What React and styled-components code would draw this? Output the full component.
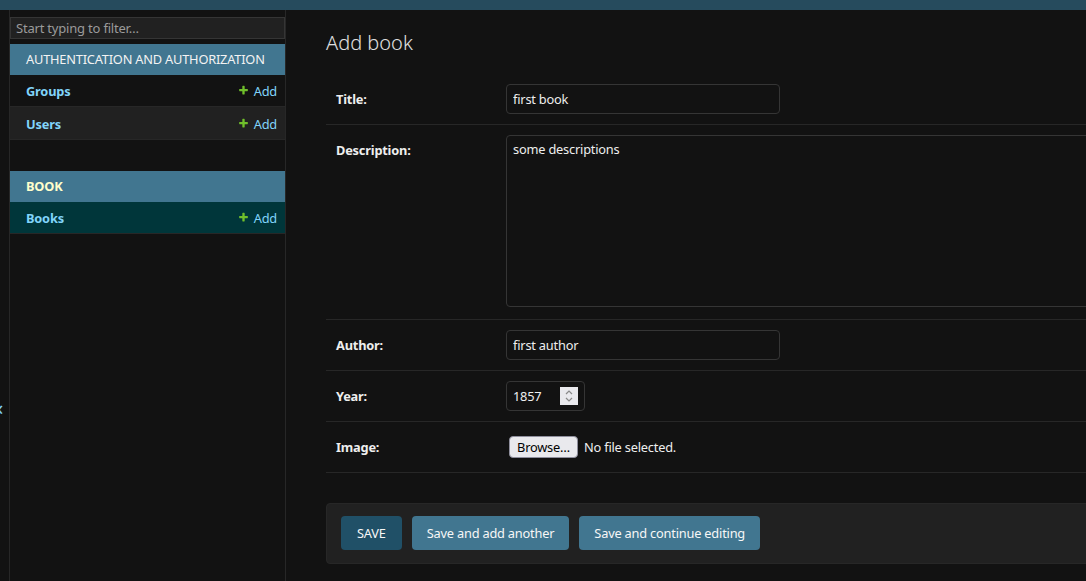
import React from "react";
import styled, { createGlobalStyle } from "styled-components";

const GlobalStyle = createGlobalStyle`
  html, body {
    margin: 0;
    padding: 0;
    background: #121212;
    overflow: hidden;
  }
  body {
    font-family: "Noto Sans", "Open Sans", sans-serif;
    font-size: 12.8px;
    letter-spacing: -0.2px;
    color: #eeeeee;
  }
  * { box-sizing: border-box; }
  input, textarea, button { letter-spacing: -0.2px; }
`;

const Page = styled.div`
  width: 1320px;
  min-height: 581px;
  display: flex;
  flex-direction: column;
  background: #121212;
`;

const Header = styled.div`
  height: 10px;
  background: #264b5d;
`;

const Body = styled.div`
  display: flex;
  flex: 1;
  min-height: 571px;
`;

const Toggle = styled.div`
  flex: 0 0 10px;
  width: 10px;
  overflow: hidden;
  border-right: 1px solid #272727;
  padding-top: 388px;
  color: #81d4fa;
  font-size: 20px;
  line-height: 20px;
`;

const ToggleGlyph = styled.span`
  display: block;
  margin-left: -7px;
`;

const Sidebar = styled.nav`
  flex: 0 0 276px;
  width: 276px;
  border-right: 1px solid #272727;
  padding-top: 7px;
`;

const Filter = styled.input`
  display: block;
  width: 100%;
  height: 22px;
  margin: 0 0 5px;
  padding: 2px 5px;
  border: 1px solid #353535;
  background: #212121;
  color: #eeeeee;
  font-family: inherit;
  font-size: 13px;
  outline: none;
  &::placeholder { color: #9b9b9b; }
`;

const Module = styled.div`
  margin-bottom: 31px;
`;

const Caption = styled.div`
  height: 31px;
  display: flex;
  align-items: center;
  padding: 0 0 1px 16px;
  background: #417690;
  color: ${(p) => (p.$current ? "#ffffcc" : "#f3f3f3")};
  font-weight: ${(p) => (p.$current ? 700 : 400)};
`;

const NavRow = styled.div`
  height: ${(p) => (p.$tall ? 33 : 32)}px;
  display: flex;
  align-items: center;
  justify-content: space-between;
  padding: ${(p) => (p.$tall ? "1px" : "0")} 8px 0 16px;
  border-bottom: 1px solid #272727;
  background: ${(p) =>
    p.$selected ? "#00363a" : p.$alt ? "#212121" : "#121212"};
`;

const ModelLink = styled.a`
  color: #81d4fa;
  font-weight: 700;
  text-decoration: none;
`;

const AddLink = styled.a`
  display: flex;
  align-items: center;
  gap: 5px;
  color: #81d4fa;
  text-decoration: none;
`;

const PlusIcon = () => (
  <svg width="11" height="11" viewBox="0 0 1792 1792" aria-hidden="true">
    <path
      fill="#70bf2b"
      d="M1600 736v192q0 40-28 68t-68 28h-416v416q0 40-28 68t-68 28h-192q-40 0-68-28t-28-68v-416h-416q-40 0-68-28t-28-68v-192q0-40 28-68t68-28h416v-416q0-40 28-68t68-28h192q40 0 68 28t28 68v416h416q40 0 68 28t28 68z"
    />
  </svg>
);

const Main = styled.main`
  flex: 1;
  padding: 21px 0 20px 40px;
`;

const Title = styled.h1`
  margin: 0 0 19px;
  font-size: 20px;
  line-height: 24px;
  font-weight: 300;
  letter-spacing: 0;
  color: #e0e0e0;
`;

const Fieldset = styled.div`
  margin-bottom: 30px;
`;

const FormRow = styled.div`
  display: flex;
  align-items: flex-start;
  padding: 10px;
  border-bottom: 1px solid #272727;
`;

const Label = styled.label`
  flex: 0 0 160px;
  margin-right: 10px;
  padding-top: 7px;
  line-height: 16px;
  font-weight: 700;
  color: #eeeeee;
`;

const TextInput = styled.input`
  width: 274px;
  height: 30px;
  padding: 5px 6px;
  border: 1px solid #353535;
  border-radius: 4px;
  background: #121212;
  color: #eeeeee;
  font-family: inherit;
  font-size: 12.8px;
  outline: none;
`;

const TextArea = styled.textarea`
  display: block;
  width: 638px;
  height: 172px;
  margin-bottom: 2px;
  padding: 5px 6px;
  border: 1px solid #353535;
  border-radius: 4px;
  background: #121212;
  color: #eeeeee;
  font-family: inherit;
  font-size: 12.8px;
  line-height: 16px;
  resize: none;
  outline: none;
`;

const NumberBox = styled.div`
  width: 79px;
  height: 30px;
  display: flex;
  align-items: center;
  padding: 0 6px;
  border: 1px solid #353535;
  border-radius: 4px;
  background: #121212;
`;

const NumberField = styled.input`
  width: 46px;
  border: 0;
  padding: 0;
  background: transparent;
  color: #eeeeee;
  font-family: inherit;
  font-size: 12.8px;
  outline: none;
`;

const Spinner = styled.span`
  width: 18px;
  height: 18px;
  margin-left: auto;
  display: flex;
  align-items: center;
  justify-content: center;
  background: #e9e9ed;
`;

const FileWrap = styled.div`
  display: flex;
  align-items: center;
  gap: 6px;
  height: 30px;
  padding-left: 3px;
`;

const BrowseButton = styled.button`
  height: 22px;
  width: 69px;
  padding: 0;
  border: 1px solid #8f8f9d;
  border-radius: 4px;
  background: #e9e9ed;
  color: #000;
  font-family: inherit;
  font-size: 12.8px;
`;

const NoFile = styled.span`
  color: #eeeeee;
`;

const SubmitRow = styled.div`
  display: flex;
  gap: 10px;
  padding: 12px 14px 13px;
  background: #212121;
  border: 1px solid #272727;
  border-radius: 4px;
`;

const Button = styled.button`
  height: 34px;
  padding: 0 ${(p) => (p.$default ? 16 : 15)}px;
  border: 0;
  border-radius: 4px;
  background: ${(p) => (p.$default ? "#205067" : "#417690")};
  color: #f7f7f7;
  font-family: inherit;
  font-size: 12.8px;
`;

const Chevrons = () => (
  <svg width="10" height="14" viewBox="0 0 10 14" aria-hidden="true">
    <path d="M2 5 L5 2 L8 5" fill="none" stroke="#8a8a8a" strokeWidth="1.2" />
    <path d="M2 9 L5 12 L8 9" fill="none" stroke="#8a8a8a" strokeWidth="1.2" />
  </svg>
);

const sections = [
  {
    name: "AUTHENTICATION AND AUTHORIZATION",
    models: [{ name: "Groups" }, { name: "Users", alt: true }],
  },
  {
    name: "BOOK",
    current: true,
    models: [{ name: "Books", selected: true }],
  },
];

export default function App() {
  return (
    <>
      <GlobalStyle />
      <Page>
        <Header />
        <Body>
          <Toggle>
            <ToggleGlyph>«</ToggleGlyph>
          </Toggle>
          <Sidebar>
            <Filter placeholder="Start typing to filter…" />
            {sections.map((s) => (
              <Module key={s.name}>
                <Caption $current={s.current}>{s.name}</Caption>
                {s.models.map((m, i) => (
                  <NavRow
                    key={m.name}
                    $alt={m.alt}
                    $selected={m.selected}
                    $tall={i > 0}
                  >
                    <ModelLink href="#">{m.name}</ModelLink>
                    <AddLink href="#">
                      <PlusIcon />
                      Add
                    </AddLink>
                  </NavRow>
                ))}
              </Module>
            ))}
          </Sidebar>
          <Main>
            <Title>Add book</Title>
            <Fieldset>
              <FormRow>
                <Label>Title:</Label>
                <TextInput defaultValue="first book" />
              </FormRow>
              <FormRow>
                <Label>Description:</Label>
                <TextArea defaultValue="some descriptions" />
              </FormRow>
              <FormRow>
                <Label>Author:</Label>
                <TextInput defaultValue="first author" />
              </FormRow>
              <FormRow>
                <Label>Year:</Label>
                <NumberBox>
                  <NumberField defaultValue="1857" />
                  <Spinner>
                    <Chevrons />
                  </Spinner>
                </NumberBox>
              </FormRow>
              <FormRow>
                <Label>Image:</Label>
                <FileWrap>
                  <BrowseButton type="button">Browse…</BrowseButton>
                  <NoFile>No file selected.</NoFile>
                </FileWrap>
              </FormRow>
            </Fieldset>
            <SubmitRow>
              <Button $default>SAVE</Button>
              <Button>Save and add another</Button>
              <Button>Save and continue editing</Button>
            </SubmitRow>
          </Main>
        </Body>
      </Page>
    </>
  );
}
